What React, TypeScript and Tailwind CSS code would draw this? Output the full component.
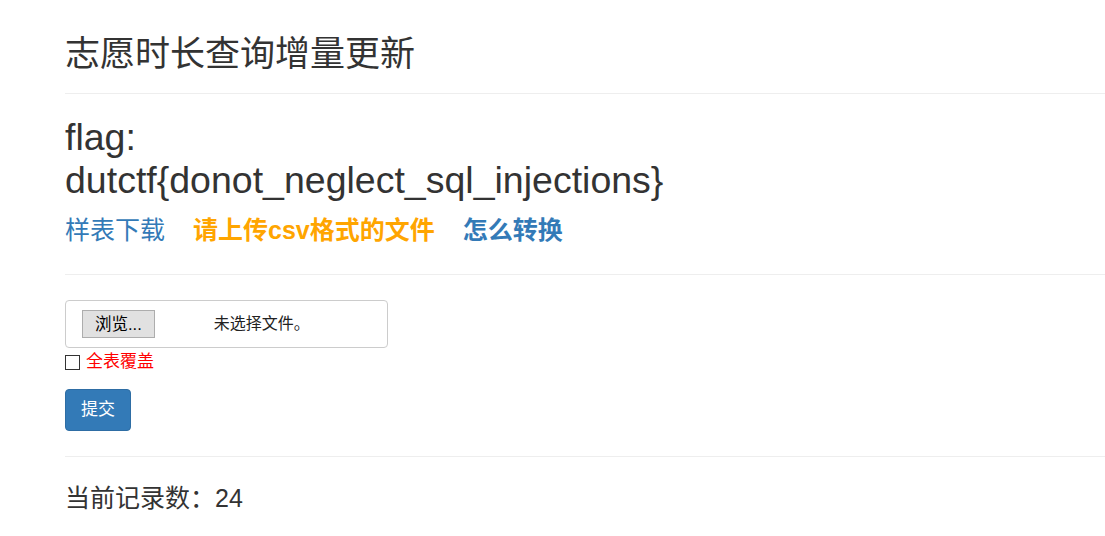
import React from 'react';

const App = () => {
    return (
        <div
            className="min-h-screen w-full bg-white pl-[65px] text-[#333]"
            style={{ fontFamily: '"Liberation Sans", Arial, "Noto Sans CJK SC", sans-serif' }}
        >
            {/* 标题 */}
            <h1 className="pt-[33px] pb-[18px] text-[35px] leading-[42px] font-normal">志愿时长查询增量更新</h1>
            <hr className="border-0 border-t border-[#eee]" />

            {/* flag */}
            <h2 className="mt-[22px] text-[37.5px] leading-[43px] font-normal">
                flag:
                <br />
                dutctf{'{'}donot_neglect_sql_injections{'}'}
            </h2>

            {/* 链接 */}
            <div className="mt-[12px] flex items-center gap-[28px] text-[25px] leading-[33px]">
                <a href="#" className="text-[#337ab7]">样表下载</a>
                <span className="font-bold text-[#ffa500]">请上传csv格式的文件</span>
                <a href="#" className="font-bold text-[#337ab7]">怎么转换</a>
            </div>
            <hr className="mt-[27px] border-0 border-t border-[#eee]" />

            {/* 上传表单 */}
            <form className="mt-[25px]">
                <div className="flex h-[48px] w-[323px] items-center rounded-[4px] border border-[#ccc] pl-[16px] text-[16px]">
                    <span className="flex h-[28px] items-center border border-[#adadad] bg-[#e1e1e1] px-[12px] text-[16.5px] text-black">
                        浏览...
                    </span>
                    <span className="ml-[59px] text-[#222]">未选择文件。</span>
                </div>
                <label className="mt-[4px] flex items-center text-[17px] leading-[20px]">
                    <span className="inline-block h-[15px] w-[15px] border border-[#333]" />
                    <span className="ml-[6px] text-[#ff0000]">全表覆盖</span>
                </label>
                <button
                    type="button"
                    className="mt-[17px] block h-[42px] rounded-[4px] border border-[#2e6da4] bg-[#337ab7] px-[15px] text-[17px] text-white"
                >
                    提交
                </button>
            </form>
            <hr className="mt-[25px] border-0 border-t border-[#eee]" />

            {/* 记录数 */}
            <p className="mt-[25px] text-[25px] leading-[32px]">当前记录数：24</p>
        </div>
    );
};

export default App;
